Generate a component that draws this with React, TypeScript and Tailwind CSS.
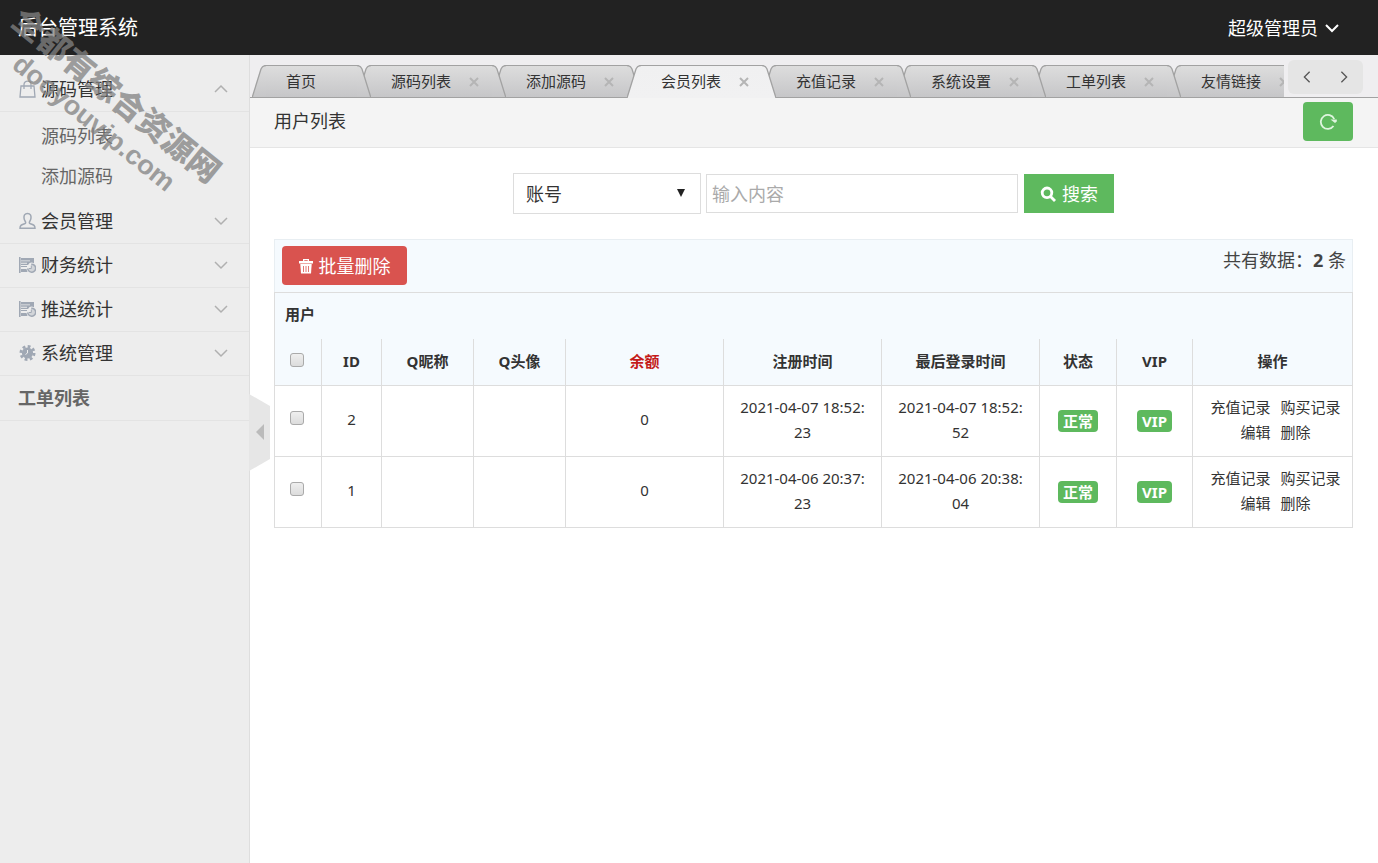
import { useState } from 'react';

type Tab = { name: string; closable: boolean };

const tabs: Tab[] = [
  { name: '首页', closable: false },
  { name: '源码列表', closable: true },
  { name: '添加源码', closable: true },
  { name: '会员列表', closable: true },
  { name: '充值记录', closable: true },
  { name: '系统设置', closable: true },
  { name: '工单列表', closable: true },
  { name: '友情链接', closable: true },
];

const users = [
  { id: 2, balance: 0, created: '2021-04-07 18:52:23', lastLogin: '2021-04-07 18:52:52' },
  { id: 1, balance: 0, created: '2021-04-06 20:37:23', lastLogin: '2021-04-06 20:38:04' },
];

const columns = [
  { title: 'ID', width: 'w-[60px]' },
  { title: 'Q昵称', width: 'w-[92px]' },
  { title: 'Q头像', width: 'w-[92px]' },
  { title: '余额', width: 'w-[158px]' },
  { title: '注册时间', width: 'w-[158px]' },
  { title: '最后登录时间', width: 'w-[158px]' },
  { title: '状态', width: 'w-[77px]' },
  { title: 'VIP', width: 'w-[76px]' },
  { title: '操作', width: 'w-[160px]' },
];

function Chevron({ dir, className }: { dir: 'up' | 'down' | 'left' | 'right'; className: string }) {
  const paths = {
    up: 'M2 11 L8 5 L14 11',
    down: 'M2 5 L8 11 L14 5',
    left: 'M11 2 L5 8 L11 14',
    right: 'M5 2 L11 8 L5 14',
  };
  return (
    <svg viewBox="0 0 16 16" fill="none" stroke="currentColor" className={className} aria-hidden="true">
      <path d={paths[dir]} />
    </svg>
  );
}

function BagIcon() {
  return (
    <svg viewBox="0 0 17 18" fill="none" stroke="currentColor" strokeWidth="1.3" className="h-[18px] w-[17px]" aria-hidden="true">
      <path d="M2 6 H15 L16 17 H1 Z" />
      <path d="M5 9 V4.5 C5 0 12 0 12 4.5 V9" />
    </svg>
  );
}

function UserIcon() {
  return (
    <svg viewBox="0 0 17 18" fill="none" stroke="currentColor" strokeWidth="1.5" className="h-[18px] w-[17px]" aria-hidden="true">
      <path d="M8.5 1.5 C5.5 1.5 4.8 3.6 5 6 C5.2 8 6 9 6.5 9.8 C7 11 6.4 11.6 5 12 C2.4 12.9 1 13.3 1 16.3 H16 C16 13.3 14.6 12.9 12 12 C10.6 11.6 10 11 10.5 9.8 C11 9 11.8 8 12 6 C12.2 3.6 11.5 1.5 8.5 1.5 Z" />
    </svg>
  );
}

function StatsIcon() {
  return (
    <svg viewBox="0 0 17 16" fill="currentColor" className="h-4 w-[17px]" aria-hidden="true">
      <path d="M0 0 H1.6 V16 H0 Z" />
      <path d="M2 1 H15 V6.2 A4.5 4.5 0 0 0 9 8 H2 V6.8 H8 V5.8 H2 V4.3 H11 V3.5 H2 Z" />
      <path d="M2 9 H8 V10 H2 Z M2 12 H7.5 L8.5 15 H2 Z" />
      <path d="M12.3 7 A4 4 0 1 1 8.7 11.2 H12.3 Z" fillOpacity="0.35" />
      <path d="M12.3 7.2 A4 4 0 1 1 8.7 11.5" fill="none" stroke="currentColor" strokeWidth="1.5" />
      <path d="M12.3 8.5 V11.5 H10" fill="none" stroke="currentColor" />
    </svg>
  );
}

function GearIcon() {
  return (
    <svg viewBox="0 0 16 16" className="h-4 w-[17px]" aria-hidden="true">
      <circle cx="8" cy="8" r="5.6" fill="currentColor" />
      <circle cx="8" cy="8" r="6.6" fill="none" stroke="currentColor" strokeWidth="2.8" strokeDasharray="2.8 2.384" />
      <path d="M8 5 V8 L6 9.5" fill="none" stroke="#ededed" strokeWidth="1" />
    </svg>
  );
}

function TrashIcon() {
  return (
    <svg viewBox="0 0 14 16" className="h-4 w-[14px]" aria-hidden="true">
      <path d="M4 3 V1 H10 V3 H14 V5.5 H0 V3 Z M5.3 3 H8.7 V2.2 H5.3 Z" fill="currentColor" fillRule="evenodd" />
      <path d="M1.3 6 H12.7 L12 15.5 H2 Z" fill="currentColor" />
      <path d="M4.5 8 V14 M7 8 V14 M9.5 8 V14" stroke="#d9534f" strokeWidth="0.8" />
    </svg>
  );
}

function SearchIcon() {
  return (
    <svg viewBox="0 0 16 16" fill="none" stroke="currentColor" strokeWidth="2.8" className="size-4" aria-hidden="true">
      <circle cx="7" cy="6.8" r="4.8" />
      <path d="M10.5 10.5 L15 15" />
    </svg>
  );
}

function RefreshIcon() {
  return (
    <svg viewBox="0 0 18 18" fill="none" stroke="currentColor" strokeWidth="1.8" className="size-[18px]" aria-hidden="true">
      <path d="M14.5 14 A7 7 0 1 1 15.2 7" />
      <path d="M11.500 7.500 H17.800 V9.500 L16 11 Z" fill="currentColor" stroke="none" />
    </svg>
  );
}

const menus = [
  { name: '会员管理', icon: <UserIcon /> },
  { name: '财务统计', icon: <StatsIcon /> },
  { name: '推送统计', icon: <StatsIcon /> },
  { name: '系统管理', icon: <GearIcon /> },
];

// slanted side of a tab, the right one is the mirrored left one
function TabEdge({ side, active, id }: { side: 'left' | 'right'; active: boolean; id: string }) {
  const line = side === 'left' ? 'M0 33 L9 4 Q10.5 0.5 14 0.5' : 'M14 33 L5 4 Q3.5 0.5 0 0.5';
  const inner = side === 'left' ? 14 : 0;
  return (
    <svg viewBox="0 0 14 33" className="h-[33px] w-[14px] shrink-0" aria-hidden="true">
      <defs>
        <linearGradient id={id} x1="0" y1="0" x2="0" y2="33" gradientUnits="userSpaceOnUse">
          <stop offset="0" stopColor={active ? '#f0f0f1' : '#dddddd'} />
          <stop offset="1" stopColor={active ? '#f1f1f2' : '#c6c6c8'} />
        </linearGradient>
      </defs>
      <path d={`${line} V33 H${inner} Z`} fill={`url(#${id})`} />
      <path d={line} fill="none" stroke="#a2a2a2" strokeWidth="1.3" />
      {!active && <path d="M0 32.5 H14" stroke="#a2a2a2" />}
    </svg>
  );
}

function Sidebar() {
  return (
    <aside className="relative w-[250px] shrink-0 border-r border-[#dedede] bg-[#ededed] pt-[13px] text-lg">
      <nav>
        <button type="button" className="flex h-11 w-full items-center border-b border-[#e3e3e3] pr-5 pb-0.5 pl-[19px] text-[#333]">
          <span className="w-[22px] text-[#a0a8b4]"><BagIcon /></span>
          源码管理
          <Chevron dir="up" className="ml-auto size-4 stroke-[1.5] text-[#b0b0b0]" />
        </button>
        <ul className="py-1 text-[#666]">
          <li><a href="#source" className="flex h-10 items-center pl-[41px]">源码列表</a></li>
          <li><a href="#add-source" className="flex h-10 items-center pl-[41px]">添加源码</a></li>
        </ul>
        {menus.map((menu) => (
          <button key={menu.name} type="button" className="flex h-11 w-full items-center border-b border-[#e3e3e3] pr-5 pb-0.5 pl-[19px] text-[#333]">
            <span className="w-[22px] text-[#a0a8b4]">{menu.icon}</span>
            {menu.name}
            <Chevron dir="down" className="ml-auto size-4 stroke-[1.5] text-[#b0b0b0]" />
          </button>
        ))}
        <a href="#orders" className="flex h-[45px] items-center border-b border-[#e3e3e3] pl-[18px] font-bold text-[#666]">工单列表</a>
      </nav>
      <button type="button" aria-label="收起菜单" className="absolute top-[339px] left-full z-10">
        <svg viewBox="0 0 21 77" className="h-[77px] w-[21px]" aria-hidden="true">
          <path d="M0 0 L21 12 V65 L0 77 Z" fill="#e6e6e6" />
          <path d="M7 38 L15 30 V46 Z" fill="#bbb" />
        </svg>
      </button>
    </aside>
  );
}

function TabBar({ current, onSelect }: { current: number; onSelect: (i: number) => void }) {
  return (
    <div className="flex h-[43px] border-b border-[#a2a2a2] bg-[#efeef0]">
      <ul className="-mb-px flex min-w-0 flex-1 overflow-hidden pt-[10px] pl-[2px] text-[15px] text-[#333]">
        {tabs.map((tab, i) => {
          const active = i === current;
          return (
            <li key={tab.name} className="relative -mr-[14px] flex h-[33px] shrink-0" style={{ zIndex: active ? 20 : 10 - i }}>
              <TabEdge side="left" active={active} id={`tab-l-${i}`} />
              <div
                className={`flex items-center border-t border-t-[#a2a2a2] ${
                  active ? 'bg-linear-to-b from-[#f0f0f1] to-[#f1f1f2] pb-px' : 'border-b border-b-[#a2a2a2] bg-linear-to-b from-[#dddddd] to-[#c6c6c8]'
                } ${tab.closable ? 'pr-[13px] pl-5' : 'pr-[41px] pl-5'}`}
              >
                <a href="#tab" onClick={() => onSelect(i)}>{tab.name}</a>
                {tab.closable && (
                  <button type="button" aria-label={`关闭${tab.name}`} className={`ml-[18px] ${active ? 'text-[#b5b5b5]' : 'text-[#b5b5b5]'}`}>
                    <svg viewBox="0 0 10 10" stroke="currentColor" strokeWidth="2" className="size-[10px]" aria-hidden="true">
                      <path d="M1 1 L9 9 M9 1 L1 9" />
                    </svg>
                  </button>
                )}
              </div>
              <TabEdge side="right" active={active} id={`tab-r-${i}`} />
            </li>
          );
        })}
      </ul>
      <div className="mt-[5px] mr-[15px] ml-1 flex h-[34px] w-[75px] shrink-0 rounded-md bg-[#e5e5e5] text-[#555]">
        <button type="button" aria-label="向左" className="flex flex-1 items-center justify-center"><Chevron dir="left" className="size-[14px] stroke-[1.5]" /></button>
        <button type="button" aria-label="向右" className="flex flex-1 items-center justify-center"><Chevron dir="right" className="size-[14px] stroke-[1.5]" /></button>
      </div>
    </div>
  );
}

function CheckBox({ label }: { label: string }) {
  return (
    <input
      type="checkbox"
      aria-label={label}
      className="block size-[14px] appearance-none rounded-[3px] border border-[#aaa] bg-linear-to-b from-[#efefef] to-[#dcdcdc] checked:bg-[#888]"
    />
  );
}

function UserTable() {
  const cell = 'border border-[#ddd] text-center';
  const badge = 'inline-block h-[22px] rounded bg-[#5eb95e] px-[5px] leading-[22px] font-bold text-white';
  return (
    <table className="w-full table-fixed border-collapse text-[15px] leading-[25px] text-[#333]">
      <colgroup>
        <col className="w-[47px]" />
        {columns.map((col) => <col key={col.title} className={col.width} />)}
      </colgroup>
      <thead className="bg-[#f5fafe]">
        <tr className="h-[46px]">
          <th colSpan={10} className="border border-b-0 border-[#ddd] px-[10px] pb-0.5 text-left">用户</th>
        </tr>
        <tr className="h-[47px]">
          <th className="border border-t-0 border-[#ddd] pr-0.5 pb-1">
            <div className="flex justify-center"><CheckBox label="全选" /></div>
          </th>
          {columns.map((col) => (
            <th key={col.title} className={`border border-t-0 border-[#ddd] ${col.title === '余额' ? 'text-[#c41a1a]' : ''}`}>{col.title}</th>
          ))}
        </tr>
      </thead>
      <tbody>
        {users.map((user) => (
          <tr key={user.id} className="h-[71px]">
            <td className={`${cell} pr-0.5 pb-1.5`}>
              <div className="flex justify-center"><CheckBox label={`选择用户${user.id}`} /></div>
            </td>
            <td className={`${cell} pb-1`}>{user.id}</td>
            <td className={cell}></td>
            <td className={cell}></td>
            <td className={`${cell} pb-1`}>{user.balance}</td>
            <td className={`${cell} px-[15px] pb-0.5 break-all`}>{user.created}</td>
            <td className={`${cell} px-[15px] pb-0.5 break-all`}>{user.lastLogin}</td>
            <td className={cell}><span className={badge}>正常</span></td>
            <td className={cell}><span className={badge}>VIP</span></td>
            <td className={`${cell} pb-0.5 pl-1.5`}>
              <div className="flex flex-wrap justify-center gap-x-[10px]">
                <a href="#recharge">充值记录</a>
                <a href="#purchase">购买记录</a>
                <a href="#edit">编辑</a>
                <a href="#delete">删除</a>
              </div>
            </td>
          </tr>
        ))}
      </tbody>
    </table>
  );
}

export default function App() {
  const [current, setCurrent] = useState(3);
  const [keyword, setKeyword] = useState('');

  return (
    <div className="relative flex min-h-screen flex-col overflow-hidden bg-white font-['Noto_Sans','Noto_Sans_CJK_SC',sans-serif]">
      <header className="flex h-[55px] items-center justify-between bg-[#222] pr-[38px] pl-[18px] text-white">
        <h1 className="text-xl">后台管理系统</h1>
        <button type="button" className="flex items-center gap-1.5 text-lg">
          超级管理员
          <Chevron dir="down" className="size-4 stroke-2" />
        </button>
      </header>

      <div className="flex flex-1">
        <Sidebar />
        <main className="min-w-0 flex-1">
          <TabBar current={current} onSelect={setCurrent} />
          <div className="flex h-[50px] items-center justify-between border-b border-[#e5e5e5] bg-[#f4f4f4] pr-[25px] pb-[3px] pl-6">
            <h2 className="text-lg text-[#333]">用户列表</h2>
            <button type="button" aria-label="刷新" className="flex h-[39px] w-[50px] items-center justify-center rounded bg-[#5eb95e] text-[#dff5df]">
              <RefreshIcon />
            </button>
          </div>

          <div className="pt-[25px] pr-[25px] pl-6">
            <form className="flex items-center justify-center gap-[5px] text-lg" onSubmit={(e) => e.preventDefault()}>
              <div className="relative">
                <select aria-label="搜索类型" className="block h-[41px] w-[188px] appearance-none border border-[#ddd] bg-white px-3 text-[#333]">
                  <option>账号</option>
                </select>
                <svg viewBox="0 0 8 8" className="pointer-events-none absolute top-4 right-4 size-2" aria-hidden="true">
                  <path d="M0 0 H8 L4 8 Z" fill="#222" />
                </svg>
              </div>
              <input
                type="text"
                aria-label="输入内容"
                placeholder="输入内容"
                value={keyword}
                onChange={(e) => setKeyword(e.target.value)}
                className="mr-px h-[39px] w-[312px] border border-[#ddd] px-[5px] text-[#333] placeholder:text-[#aaa]"
              />
              <button type="submit" className="flex h-[39px] w-[90px] items-center justify-center gap-1.5 bg-[#5eb95e] text-white">
                <SearchIcon />
                搜索
              </button>
            </form>

            <div className="mt-[25px] flex h-[53px] items-start justify-between border border-b-0 border-[#e8eef2] bg-[#f5fafe] py-1.5 pr-1.5 pl-[7px] text-lg">
              <button type="button" className="flex h-[39px] w-[125px] items-center justify-center gap-1.5 rounded bg-[#d9534f] text-white">
                <TrashIcon />
                批量删除
              </button>
              <p className="text-[#444]">共有数据：<strong>2</strong> 条</p>
            </div>
            <UserTable />
          </div>
        </main>
      </div>

      <div className="pointer-events-none absolute -top-px left-[30px] z-30 origin-top-left rotate-[39deg] whitespace-nowrap text-[#828282]/75" aria-hidden="true">
        <p className="text-[32px] leading-10 font-black">全都有综合资源网</p>
        <p className="pl-7 font-['Liberation_Sans',sans-serif] text-[27px] leading-8 font-bold">dooyouvip.com</p>
      </div>
    </div>
  );
}
